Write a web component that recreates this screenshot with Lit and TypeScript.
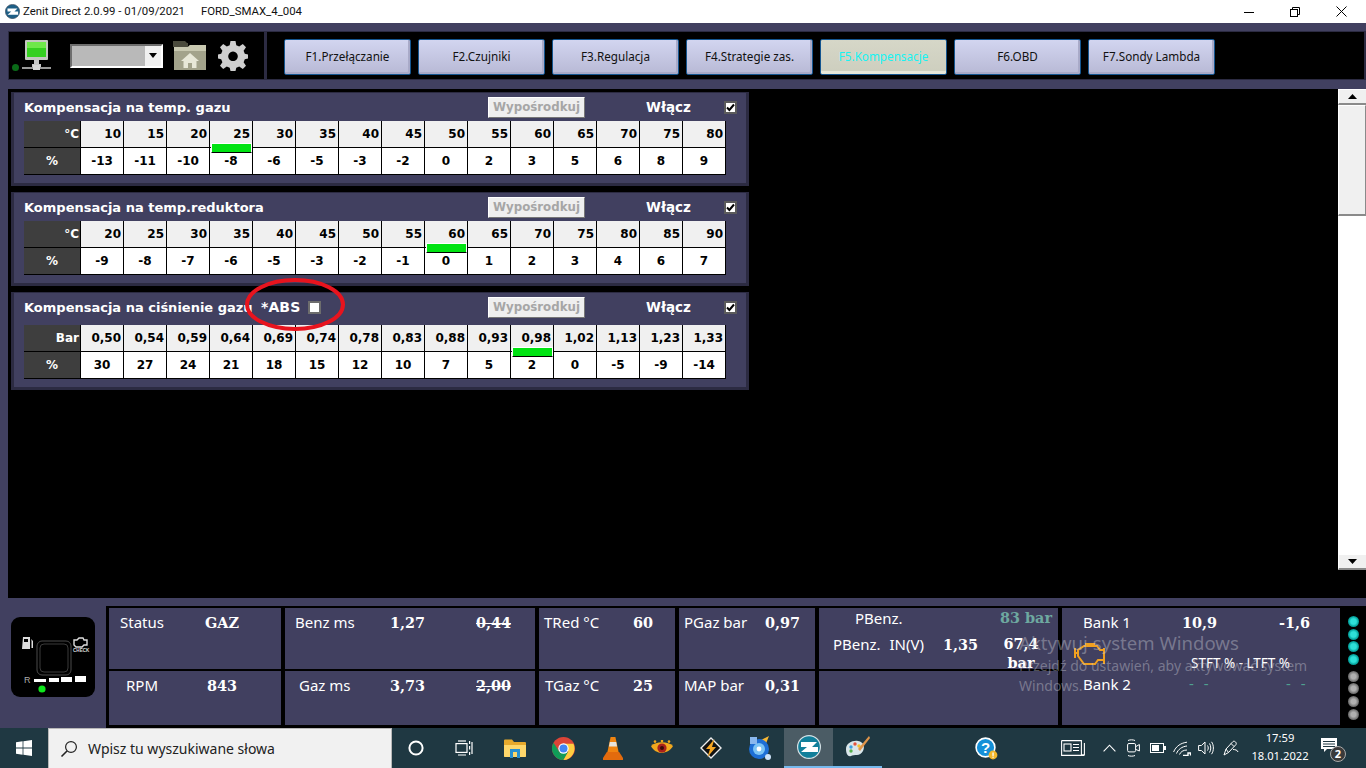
import { LitElement, html, css, svg } from "lit";
import { customElement } from "lit/decorators.js";

const tabs = ["F1.Przełączanie", "F2.Czujniki", "F3.Regulacja", "F4.Strategie zas.", "F5.Kompensacje", "F6.OBD", "F7.Sondy Lambda"];

type Comp = { title: string; unit: string; head: string[]; vals: string[]; mark: number; abs?: boolean };
const comps: Comp[] = [
  { title: "Kompensacja na temp. gazu", unit: "°C", head: ["10","15","20","25","30","35","40","45","50","55","60","65","70","75","80"], vals: ["-13","-11","-10","-8","-6","-5","-3","-2","0","2","3","5","6","8","9"], mark: 3 },
  { title: "Kompensacja na temp.reduktora", unit: "°C", head: ["20","25","30","35","40","45","50","55","60","65","70","75","80","85","90"], vals: ["-9","-8","-7","-6","-5","-3","-2","-1","0","1","2","3","4","6","7"], mark: 8 },
  { title: "Kompensacja na ciśnienie gazu", unit: "Bar", head: ["0,50","0,54","0,59","0,64","0,69","0,74","0,78","0,83","0,88","0,93","0,98","1,02","1,13","1,23","1,33"], vals: ["30","27","24","21","18","15","12","10","7","5","2","0","-5","-9","-14"], mark: 10, abs: true },
];

type Stat = { label: string; pad: number; v: string; v2?: string; cols: string };
const statCells: Stat[] = [
  { label: "Status", pad: 11, v: "GAZ", cols: "85px 60px" },
  { label: "Benz ms", pad: 10, v: "1,27", v2: "0,44", cols: "95px 86px 50px" },
  { label: "TRed °C", pad: 5, v: "60", cols: "89px 30px" },
  { label: "PGaz bar", pad: 5, v: "0,97", cols: "81px 45px" },
  { label: "RPM", pad: 17, v: "843", cols: "81px 60px" },
  { label: "Gaz ms", pad: 14, v: "3,73", v2: "2,00", cols: "91px 86px 50px" },
  { label: "TGaz °C", pad: 6, v: "25", cols: "88px 30px" },
  { label: "MAP bar", pad: 5, v: "0,31", cols: "81px 45px" },
];

const icoWin = svg`<svg width="16" height="16" viewBox="0 0 16 16"><path fill="#fff" d="M0 2.3 6.6 1.3V7.5H0ZM7.4 1.2 16 0V7.5H7.4ZM0 8.4H6.6V14.7L0 13.7ZM7.4 8.4H16V16L7.4 14.8Z"/></svg>`;
const icoSearch = svg`<svg width="18" height="18" viewBox="0 0 18 18" fill="none" stroke="#222" stroke-width="1.2"><circle cx="11" cy="7" r="5.4"/><path d="M7 11 1.5 16.5" stroke-width="1.6"/></svg>`;
const icoCortana = svg`<svg width="16" height="16" viewBox="0 0 16 16" fill="none" stroke="#fff" stroke-width="2"><circle cx="8" cy="8" r="6.6"/></svg>`;
const icoTask = svg`<svg width="18" height="16" viewBox="0 0 18 16" fill="none" stroke="#fff" stroke-width="1.2"><path d="M3 1H11"/><rect x="1" y="3.6" width="11" height="8.8"/><path d="M3 15H11M14.6 1V4M14.6 6V9.5M14.6 12V15M17 2V14" /></svg>`;
const icoFolder = svg`<svg width="22" height="19" viewBox="0 0 22 19"><path fill="#e8a92c" d="M0 1.5A1 1 0 0 1 1 .5H8L10 3H21A1 1 0 0 1 22 4V17A1 1 0 0 1 21 18H1A1 1 0 0 1 0 17Z"/><path fill="#ffd76b" d="M0 6H22V17A1 1 0 0 1 21 18H1A1 1 0 0 1 0 17Z"/><path fill="#2a8fd0" d="M6 10H16V19H13V13H9V19H6Z"/></svg>`;
const icoChrome = svg`<svg width="23" height="23" viewBox="0 0 24 24"><circle cx="12" cy="12" r="12" fill="#db4437"/><path fill="#0f9d58" d="M1.6 6 12 24A12 12 0 0 1 1.6 6Z"/><path fill="#0f9d58" d="M1.6 6 7 15.5 12 24 17 15 12 17 7 14Z"/><path fill="#ffcd40" d="M12 7H22.4A12 12 0 0 1 12 24L17 15Z"/><circle cx="12" cy="12" r="5.4" fill="#fff"/><circle cx="12" cy="12" r="4.2" fill="#4285f4"/></svg>`;
const icoVlc = svg`<svg width="20" height="23" viewBox="0 0 20 23"><path fill="#f08410" d="M7.6 0H12.4L15.6 15H4.4Z"/><path fill="#e8e4dc" d="M6.8 5H13.2L14 9.5H6Z"/><path fill="#e36b0d" d="M3.8 15H16.2L20 21V23H0V21Z"/></svg>`;
const icoXn = svg`<svg width="24" height="16" viewBox="0 0 24 16"><path fill="#f2a81e" d="M1 6C6 1 18 1 23 6 19 14 6 16 1 6Z"/><circle cx="12" cy="8" r="4.6" fill="#a8211c"/><circle cx="12" cy="8" r="2" fill="#3a0a08"/><g fill="#f2a81e"><circle cx="5" cy="1.6" r="1.3"/><circle cx="12" cy="1" r="1.3"/><circle cx="19" cy="1.6" r="1.3"/></g></svg>`;
const icoAmp = svg`<svg width="22" height="22" viewBox="0 0 22 22"><path fill="#111" stroke="#eee" stroke-width="1.4" d="M11 1 21 11 11 21 1 11Z"/><path fill="#f6a623" d="M14.5 2 6 12H10L7.5 20 16 10H12Z"/></svg>`;
const icoDisc = svg`<svg width="24" height="24" viewBox="0 0 24 24"><path fill="#f7b733" d="M9 6 21 0 17 10Z"/><circle cx="11" cy="13" r="10" fill="#1e6fd6"/><circle cx="11" cy="13" r="6" fill="#7cc4f5"/><circle cx="11" cy="13" r="2.4" fill="#fff"/><rect x="2" y="1" width="7" height="7" fill="#8ab8ee"/><circle cx="20" cy="21" r="3" fill="#cfe3f8"/></svg>`;
const icoPaint = svg`<svg width="25" height="23" viewBox="0 0 25 23"><path fill="#d9e6ea" d="M1 13C1 7 8 4 13 5 19 6 20 11 18 15 15 21 9 18 6 20 3 21 1 18 1 13Z"/><circle cx="6" cy="11" r="1.7" fill="#3ba0e0"/><circle cx="10" cy="8" r="1.7" fill="#e4533d"/><circle cx="14" cy="10" r="1.7" fill="#f2c230"/><circle cx="6" cy="15" r="1.7" fill="#56b04c"/><path fill="#e0954a" d="M24 0 25 2 15 15 13 13Z"/></svg>`;
const icoZenit = svg`<svg width="24" height="24" viewBox="0 0 24 24"><circle cx="12" cy="12" r="11.4" fill="#127f9a" stroke="#d7e2e6" stroke-width="1.2"/><path fill="#fff" d="M4 7H20L15 12H21V17H4L10 12H4Z"/></svg>`;
const icoHelp = svg`<svg width="23" height="23" viewBox="0 0 23 23"><circle cx="10.5" cy="10.5" r="9.4" fill="#1590d8" stroke="#fff" stroke-width="1.6"/><text x="10.5" y="15.5" text-anchor="middle" font-family="Liberation Sans" font-weight="700" font-size="15" fill="#fff">?</text><circle cx="18" cy="18" r="4.4" fill="#f4b82c"/><rect x="17.4" y="15.5" width="1.3" height="3.4" fill="#fff"/><rect x="17.4" y="19.6" width="1.3" height="1.2" fill="#fff"/></svg>`;
const icoNews = svg`<svg width="24" height="16" viewBox="0 0 24 16" fill="none" stroke="#fff" stroke-width="1.1"><path d="M.6 .6H20.4V14.8H23.4V3M.6 .6V15.4H23.4"/><rect x="3" y="4" width="7" height="7"/><path d="M12 4.5H18M12 7.5H18M12 10.5H18"/></svg>`;
const icoChev = svg`<svg width="13" height="8" viewBox="0 0 13 8" fill="none" stroke="#fff" stroke-width="1.1"><path d="M.6 7.3 6.5 1.2 12.4 7.3"/></svg>`;
const icoMeet = svg`<svg width="13" height="18" viewBox="0 0 13 18" fill="none" stroke="#fff" stroke-width="1"><path d="M1 1.5C3 .6 6 .6 8 1.5M1 16.5C3 17.4 6 17.4 8 16.5"/><rect x=".6" y="4.5" width="8" height="8.4" rx="1.4"/><path d="M9 7.5 12.4 5.5V12L9 10.5"/></svg>`;
const icoBatt = svg`<svg width="16" height="10" viewBox="0 0 16 10"><rect x=".5" y=".5" width="13" height="9" fill="none" stroke="#fff"/><rect x="2" y="2" width="7" height="6" fill="#fff"/><rect x="14" y="3" width="2" height="4" fill="#fff"/></svg>`;
const icoWifi = svg`<svg width="18" height="15" viewBox="0 0 18 15" fill="none" stroke="#fff" stroke-width="1"><path d="M.6 11C3 5 8 2 14 1.2M3.5 12.5C5 8.5 9 5.5 14 5M6.5 13.5C7.5 11 10 9 14 9"/><path d="M10 14.4H15V12H17.5V14.4" stroke-width="1.4"/></svg>`;
const icoSpeak = svg`<svg width="16" height="14" viewBox="0 0 16 14" fill="none" stroke="#fff" stroke-width="1"><path d="M.6 4.5H3.4L7 1V13L3.4 9.5H.6Z"/><path d="M9.5 4.5C10.5 6 10.5 8 9.5 9.5M11.5 2.5C13.2 5 13.2 9 11.5 11.5M13.5 .8C16 4 16 10 13.5 13.2"/></svg>`;
const icoPen = svg`<svg width="16" height="16" viewBox="0 0 16 16" fill="none" stroke="#fff" stroke-width="1"><path d="M1 15 3 9 10 1.5C11.5.5 14 2.5 13 4.5L5.5 12.5Z"/><path d="M8 3.5 11 6.5M3 9 5.5 12.5M10 9.5C12 9.5 14.5 10 15 12"/></svg>`;

const taskIcons = [icoFolder, icoChrome, icoVlc, icoXn, icoAmp, icoDisc, icoZenit, icoPaint];

@customElement("app-root")
export class AppRoot extends LitElement {
  static styles = css`
    :host { display: block; width: 1366px; height: 768px; position: relative; overflow: hidden; background: #414060; font-family: "Noto Sans", sans-serif; }
    .win { height: 768px; display: flex; flex-direction: column; }
    .title { height: 23px; background: #fff; display: flex; align-items: center; font: 11.4px/23px Roboto, sans-serif; color: #111; flex: none; }
    .title .logo { margin: 0 3px 0 5px; display: flex; }
    .title .file { margin-left: 16px; }
    .title .caps { margin-left: auto; margin-right: 2px; display: flex; }
    .cap { width: 46px; display: flex; justify-content: center; align-items: center; height: 23px; }
    .body { height: 575px; box-sizing: border-box; padding: 8px 0 0 8px; display: flex; flex-direction: column; flex: none; }
    .toolbar { height: 47px; display: flex; border: 1px solid #2c2b42; border-right-width: 2px; background: #000; flex: none; margin-bottom: 9px; }
    .tool-left { width: 255px; height: 47px; display: flex; align-items: center; position: relative; flex: none; }
    .tool-div { width: 3px; background: #2c2b42; flex: none; }
    .tool-tabs { display: flex; gap: 7px; padding: 7px 0 0 17px; }
    .tab { width: 127px; height: 36px; box-sizing: border-box; border: 1px solid #14558f; border-radius: 2px; background: linear-gradient(#d2d5f0, #b8b9d5); box-shadow: inset -2px -2px 0 #a9aac8; font: 11.7px/32px "Noto Sans", sans-serif; color: #111; text-align: center; }
    .tab.on { background: linear-gradient(#d6d7c8, #cdcebe); box-shadow: inset 0 -3px 0 #e6e7da; color: #17f3f3; }
    .led-g { width: 7px; height: 7px; border-radius: 50%; background: #0a6a18; margin-left: 3px; margin-top: 24px; flex: none; }
    .mon { margin-left: 3px; display: flex; flex: none; margin-top: -1px; }
    .combo { width: 93px; height: 24px; box-sizing: border-box; margin-left: 19px; background: #b9b9b9; border: 2px solid; border-color: #6e6e6e #fff #fff #6e6e6e; display: flex; justify-content: flex-end; flex: none; }
    .combo i { width: 16px; background: #f0f0f0; display: flex; align-items: center; justify-content: center; }
    .folder { margin-left: 9px; display: flex; flex: none; }
    .gear { margin-left: 11px; display: flex; flex: none; }
    .main { flex: 1; display: flex; background: #000; min-height: 0; }
    .panels { flex: 1; padding: 3px 0 0 3px; display: flex; flex-direction: column; gap: 6px; }
    .panel { width: 738px; box-sizing: border-box; background: #414060; border: 1px solid #2c2b42; border-width: 1px 3px 3px 3px; padding: 0 0 8px 10px; }
    .panel-h { height: 28px; box-sizing: border-box; display: flex; align-items: center; font: 700 13px/20px "DejaVu Sans", sans-serif; color: #fff; white-space: nowrap; }
    .panel.last .panel-h { height: 32px; padding-bottom: 4px; }
    .panel-h .ttl { width: 464px; flex: none; padding-top: 1px; }
    .panel.last .panel-h .ttl { width: 237px; }
    .abs { width: 227px; flex: none; display: flex; align-items: center; font-size: 14px; letter-spacing: .1px; }
    .abs .box { width: 13px; height: 13px; box-sizing: border-box; border: 2px solid #6d6d6d; background: #fff; margin-left: 8px; }
    .btn { width: 97px; height: 21px; box-sizing: border-box; background: #efefef; border: 1px solid; border-color: #fff #777 #777 #fff; font: 700 11.8px/18px "DejaVu Sans", sans-serif; color: #a6a6a6; text-align: center; flex: none; }
    .wl { margin-left: 61px; width: 78px; font-size: 13.5px; flex: none; }
    .chk { width: 13px; height: 13px; box-sizing: border-box; border: 2px solid #5b5b5b; background: #fff; display: flex; flex: none; }
    .table { display: grid; grid-template-columns: 57px repeat(15, 43px); width: 702px; font: 700 12px/27px "DejaVu Sans", sans-serif; color: #000; }
    .c { height: 27px; box-sizing: border-box; border-right: 1px solid #000; border-bottom: 1px solid #000; position: relative; }
    .c.h { background: #f0f0f0; text-align: right; padding-right: 2px; }
    .c.v { background: #fff; text-align: center; }
    .c.k { background: #3e3e3e; color: #fff; }
    .c.ku { text-align: right; padding-right: 1px; }
    .c.kp { text-align: center; }
    .mark { position: absolute; left: 1px; right: 0; top: 22px; height: 10px; box-sizing: border-box; background: #00e312; border: 1px solid #000; border-top: 1px solid #fff; border-left-color: #fff; border-right-color: #fff; z-index: 1; }
    .scroll { width: 28px; display: flex; flex-direction: column; flex: none; height: 481px; }
    .sb { height: 16px; background: #f0f0f0; border-bottom: 2px solid #8a8a8a; border-top: 1px solid #fff; border-left: 1px solid #fff; display: flex; align-items: center; justify-content: center; flex: none; box-sizing: border-box; }
    .thumb { height: 111px; flex: none; background: #f0f0f0; border: 1px solid #fff; border-right: 1px solid #8a8a8a; border-bottom: 2px solid #8a8a8a; box-sizing: border-box; }
    .track { flex: 1; background: #fff; }
    .bottom { height: 130px; flex: none; display: flex; background: #414060; padding-top: 8px; box-sizing: border-box; }
    .gauge { width: 84px; height: 80px; background: #000; border-radius: 9px; margin: 11px 11px 0 11px; flex: none; display: flex; }
    .stats { width: 1260px; height: 122px; box-sizing: border-box; background: #000; padding: 2px 0 3px 3px; display: grid; grid-template-columns: 172px 250px 136px 136px 239px 278px 21px; grid-template-rows: 61px 54px; column-gap: 4px; row-gap: 2px; flex: none; color: #fff; }
    .s { background: #414060; font: 15px/24px "Noto Sans", sans-serif; white-space: nowrap; display: grid; align-content: start; }
    .val { font: 700 14.4px/24px "DejaVu Serif", serif; padding-top: 1px; }
    .strike { text-decoration: line-through; }
    .s5 { grid-column: 5; grid-row: 1; display: block; position: relative; }
    .s5b { grid-column: 5; grid-row: 2; }
    .s6 { grid-column: 6; grid-row: 1 / span 2; display: flex; flex-direction: column; padding: 2px 0 0 21px; align-content: normal; }
    .b-row { display: grid; grid-template-columns: 99px 97px 60px; height: 24px; }
    .s5 .l1 { display: grid; grid-template-columns: 154px 58px; padding-left: 36px; height: 22px; line-height: 22px; margin-top: -1px; }
    .s5 .l2 { display: grid; grid-template-columns: 110px 52px 66px; padding-left: 14px; margin-top: 3px; }
    .wide { word-spacing: 5px; }
    .teal { color: #6ea9a0; font: 700 14.4px/22px "DejaVu Serif", serif; margin-left: -9px; }
    .wrapval { white-space: normal; text-align: center; line-height: 19px; margin-top: 2px; width: 52px; padding-top: 0; }
    .mid { display: flex; align-items: center; height: 38px; margin-left: -9px; padding-top: 3px; box-sizing: border-box; }
    .mid small { margin-left: 86px; font: 13.5px/16px "Noto Sans", sans-serif; padding-top: 16px; }
    .dash { color: #4fa090; font-size: 15px; letter-spacing: 3px; padding-left: 7px; margin-top: -1px; }
    .leds { grid-column: 7; grid-row: 1 / span 2; background: #000; display: flex; flex-direction: column; padding: 8px 0 0 1px; gap: 0; margin-left: 3px; }
    .ld { width: 11px; height: 11px; border-radius: 50%; margin-bottom: 1.7px; background: radial-gradient(circle, #2ee0d8 0 35%, #07a8a2 60%, #066 100%); flex: none; }
    .ld.off { background: radial-gradient(circle, #b0b0b0 0 30%, #6e6e6e 65%, #444 100%); }
    .ld.gap { margin-top: 4px; }
    .taskbar { height: 40px; flex: none; background: #1f3842; display: flex; align-items: center; color: #fff; font: 11px/18px "Noto Sans", sans-serif; }
    .start { width: 48px; height: 40px; display: flex; align-items: center; justify-content: center; flex: none; }
    .search { width: 344px; height: 40px; box-sizing: border-box; background: #f1f1f1; border: 1px solid #b8b8b8; border-bottom: 0; display: flex; align-items: center; padding-left: 11px; color: #222; font-size: 14px; flex: none; }
    .search span { margin-left: 10px; }
    .slot { width: 48px; height: 40px; display: flex; align-items: center; justify-content: center; flex: none; }
    .apps { display: flex; margin-left: 2px; }
    .apps .slot { width: 49px; box-sizing: border-box; }
    .slot.act { background: #4b5c65; border-bottom: 2px solid #76b9ed; }
    .slot.run { border-bottom: 2px solid #76b9ed; margin-left: 0; }
    .tray { display: flex; align-items: center; margin-left: auto; }
    .t { display: flex; justify-content: center; align-items: center; height: 40px; flex: none; }
    .clock { width: 64px; text-align: center; font-size: 11.2px; line-height: 18px; display: block; padding-top: 1px; box-sizing: border-box; }
    .notif { width: 54px; position: relative; justify-content: flex-start; padding-left: 9px; box-sizing: border-box; }
    .badge { position: absolute; left: 18px; top: 18px; width: 16px; height: 16px; border-radius: 50%; background: #3a3a3a; border: 1px solid #aaa; box-sizing: border-box; font: 700 11px/14px "Noto Sans", sans-serif; text-align: center; color: #fff; }
    .ring { position: absolute; left: 245px; top: 278px; pointer-events: none; }
    .wm { position: absolute; left: 1019px; top: 630px; color: rgba(200,200,210,.42); font: 14px/20px "Noto Sans", sans-serif; width: 300px; pointer-events: none; white-space: nowrap; }
    .wm b { display: block; font-weight: 400; font-size: 18.6px; line-height: 26px; }
    .engine { display: flex; margin-left: 0; flex: none; }
  `;

  comp(c: Comp) {
    return html`<div class="panel ${c.abs ? "last" : ""}">
      <div class="panel-h">
        <span class="ttl">${c.title}</span>
        ${c.abs ? html`<span class="abs">*ABS<span class="box"></span></span>` : ""}
        <span class="btn">Wypośrodkuj</span>
        <span class="wl">Włącz</span>
        <span class="chk"><svg width="9" height="9" viewBox="0 0 9 9"><path d="M1 4.5 3.4 7 8 1.5" fill="none" stroke="#000" stroke-width="2"/></svg></span>
      </div>
      <div class="table">
        <div class="c k ku">${c.unit}</div>
        ${c.head.map((h, n) => html`<div class="c h">${h}${n === c.mark ? html`<div class="mark"></div>` : ""}</div>`)}
        <div class="c k kp">%</div>
        ${c.vals.map((v) => html`<div class="c v">${v}</div>`)}
      </div>
    </div>`;
  }

  stat(s: Stat) {
    return html`<div class="s" style="padding:2px 0 0 ${s.pad}px;grid-template-columns:${s.cols}">
      <span>${s.label}</span><span class="val">${s.v}</span>${s.v2 ? html`<span class="val strike">${s.v2}</span>` : ""}
    </div>`;
  }

  render() {
    return html`<div class="win">
      <div class="title">
        <span class="logo"><svg width="15" height="15" viewBox="0 0 24 24"><circle cx="12" cy="12" r="11.4" fill="#1e5f86" stroke="#39485a" stroke-width="1"/><path fill="#fff" d="M4 7H20L15 12H21V17H4L10 12H4Z"/></svg></span>
        <span>Zenit Direct 2.0.99 - 01/09/2021</span><span class="file">FORD_SMAX_4_004</span>
        <span class="caps">
          <span class="cap"><svg width="10" height="10"><path d="M0 5.5H10" stroke="#000"/></svg></span>
          <span class="cap"><svg width="10" height="10" fill="none" stroke="#000"><path d="M2.5 2.5V.5H9.5V7.5H7.5"/><rect x=".5" y="2.5" width="7" height="7"/></svg></span>
          <span class="cap"><svg width="11" height="11" stroke="#000"><path d="M.5 .5 10.5 10.5M10.5 .5 .5 10.5"/></svg></span>
        </span>
      </div>
      <div class="body">
        <div class="toolbar">
          <div class="tool-left">
            <span class="led-g"></span>
            <span class="mon"><svg width="29" height="33" viewBox="0 0 29 33"><rect x="3" y="1" width="23" height="20" rx="1" fill="#c4c8c0"/><rect x="5" y="3" width="19" height="15" fill="#35d020"/><rect x="5" y="3" width="19" height="6" fill="#6fe84a"/><path fill="#c8c8c8" d="M12 21H17V25H19V28H10V25H12Z"/><rect x="0" y="28" width="29" height="2" fill="#9a9a9a"/><rect x="11" y="26" width="7" height="5" fill="#d8d8d8"/></svg></span>
            <span class="combo"><i><svg width="8" height="5"><path d="M0 0H8L4 5Z"/></svg></i></span>
            <span class="folder"><svg width="35" height="31" viewBox="0 0 35 31"><path fill="#4a4a3c" d="M1 1H13L15 3H16V7H1Z"/><path fill="#a3a38b" d="M2 7H16L18 5H34V30H2Z"/><path fill="#c8c8b0" d="M2 7H16L18 5H34V11H2Z"/><path fill="#e8e8d8" d="M18 13 27 21H24.5V28H20V23H16V28H11.5V21H9Z"/></svg></span>
            <span class="gear"><svg width="30" height="30" viewBox="0 0 30 30"><path fill="#cfcfcf" fill-rule="evenodd" d="M12.5 0H17.5L18.3 4.2 21.2 5.4 24.8 3 28 6.2 25.6 9.8 26.8 12.7 30 13.5V17.5L26.8 18.3 25.6 21.2 28 24.8 24.8 28 21.2 25.6 18.3 26.8 17.5 30H12.5L11.7 26.8 8.8 25.6 5.2 28 2 24.8 4.4 21.2 3.2 18.3 0 17.5V13.5L3.2 12.7 4.4 9.8 2 6.2 5.2 3 8.8 5.4 11.7 4.2ZM15 10.5A4.8 4.8 0 1 0 15.01 10.5Z"/></svg></span>
          </div>
          <div class="tool-div"></div>
          <div class="tool-tabs">
            ${tabs.map((t, i) => html`<div class="tab ${i === 4 ? "on" : ""}">${t}</div>`)}
          </div>
        </div>
        <div class="main">
          <div class="panels">${comps.map((c) => this.comp(c))}</div>
          <div class="scroll">
            <div class="sb"><svg width="9" height="5"><path d="M4.5 0 9 5H0Z"/></svg></div>
            <div class="thumb"></div>
            <div class="track"></div>
            <div class="sb"><svg width="9" height="5"><path d="M0 0H9L4.5 5Z"/></svg></div>
          </div>
        </div>
      </div>
      <div class="bottom">
        <div class="gauge">
          <svg width="84" height="80" viewBox="0 0 84 80">
            <rect x="26" y="24" width="34" height="34" rx="5" fill="none" stroke="#4a4a4a"/>
            <rect x="29" y="27" width="28" height="28" rx="4" fill="none" stroke="#3a3a3a"/>
            <path fill="#ddd" d="M12 20H19V32H11ZM20 22 22 24V31H20.5V24Z"/>
            <rect x="13" y="22" width="4" height="3" fill="#000"/>
            <path fill="none" stroke="#ddd" stroke-width="1.4" d="M63 23H66L68 21H72L73 23H76V28H73L71 30H65L63 28Z"/>
            <text x="62" y="35" font-family="Liberation Sans" font-size="4.6" font-weight="700" fill="#ddd">CHECK</text>
            <text x="13" y="66" font-family="Liberation Sans" font-size="9" fill="#aaa">R</text>
            <rect x="23" y="62" width="12" height="3" fill="#fff"/>
            <rect x="38" y="61" width="10" height="4" fill="#fff"/>
            <rect x="50" y="60" width="11" height="5" fill="#fff"/>
            <rect x="64" y="59" width="11" height="6" fill="#fff"/>
            <circle cx="31" cy="72" r="3.6" fill="#0ee81c"/>
          </svg>
        </div>
        <div class="stats">
          ${statCells.slice(0, 4).map((s) => this.stat(s))}
          <div class="s s5">
            <div class="l1"><span>PBenz.</span><span class="teal">83 bar</span></div>
            <div class="l2"><span class="wide">PBenz. IN(V)</span><span class="val">1,35</span><span class="val wrapval">67,4 bar</span></div>
          </div>
          <div class="s s6">
            <div class="b-row"><span>Bank 1</span><span class="val">10,9</span><span class="val">-1,6</span></div>
            <div class="mid">
              <span class="engine"><svg width="31" height="23" viewBox="0 0 31 23" fill="none" stroke="#f0a020" stroke-width="2"><path d="M1 5V15M1 10H4V13L10 21H21L24 17H30M30 5V21M4 10V7L10 3H23L26 7H30M11 1H21"/></svg></span>
              <small>STFT % - LTFT %</small>
            </div>
            <div class="b-row"><span>Bank 2</span><span class="dash">- -</span><span class="dash">- -</span></div>
          </div>
          <div class="leds">
            ${[0, 1, 2, 3].map(() => html`<span class="ld"></span>`)}
            ${[0, 1, 2, 3].map((n) => html`<span class="ld off ${n === 0 ? "gap" : ""}"></span>`)}
          </div>
          ${statCells.slice(4).map((s) => this.stat(s))}
          <div class="s s5b"></div>
        </div>
      </div>
      <div class="taskbar">
        <div class="start">${icoWin}</div>
        <div class="search">${icoSearch}<span>Wpisz tu wyszukiwane słowa</span></div>
        <div class="slot">${icoCortana}</div>
        <div class="slot">${icoTask}</div>
        <div class="apps">
          ${taskIcons.map((ic, i) => html`<div class="slot ${i === 6 ? "act" : i === 7 ? "run" : ""}">${ic}</div>`)}
        </div>
        <div class="tray">
          <span class="t" style="width:48px;margin-right:39px">${icoHelp}</span>
          <span class="t" style="width:48px">${icoNews}</span>
          <span class="t" style="width:24px">${icoChev}</span>
          <span class="t" style="width:25px">${icoMeet}</span>
          <span class="t" style="width:23px">${icoBatt}</span>
          <span class="t" style="width:25px">${icoWifi}</span>
          <span class="t" style="width:23px">${icoSpeak}</span>
          <span class="t" style="width:28px">${icoPen}</span>
          <span class="t clock" style="margin-left:3px"><div>17:59</div><div>18.01.2022</div></span>
          <span class="t notif"><svg width="16" height="14" viewBox="0 0 16 14" style="margin-top:-6px"><path fill="#fff" d="M0 0H16V11H6L3 14V11H0Z"/><path stroke="#1f3842" d="M2 3.5H14M2 6H14M2 8.5H14"/></svg><span class="badge">2</span></span>
        </div>
      </div>
      <div class="wm"><b>Aktywuj system Windows</b><div>Przejdź do ustawień, aby aktywować system</div><div>Windows.</div></div>
      <svg class="ring" width="100" height="53" viewBox="0 0 100 53"><ellipse cx="50" cy="26.5" rx="48" ry="24.5" fill="none" stroke="#e8141e" stroke-width="4"/></svg>
    </div>`;
  }
}
